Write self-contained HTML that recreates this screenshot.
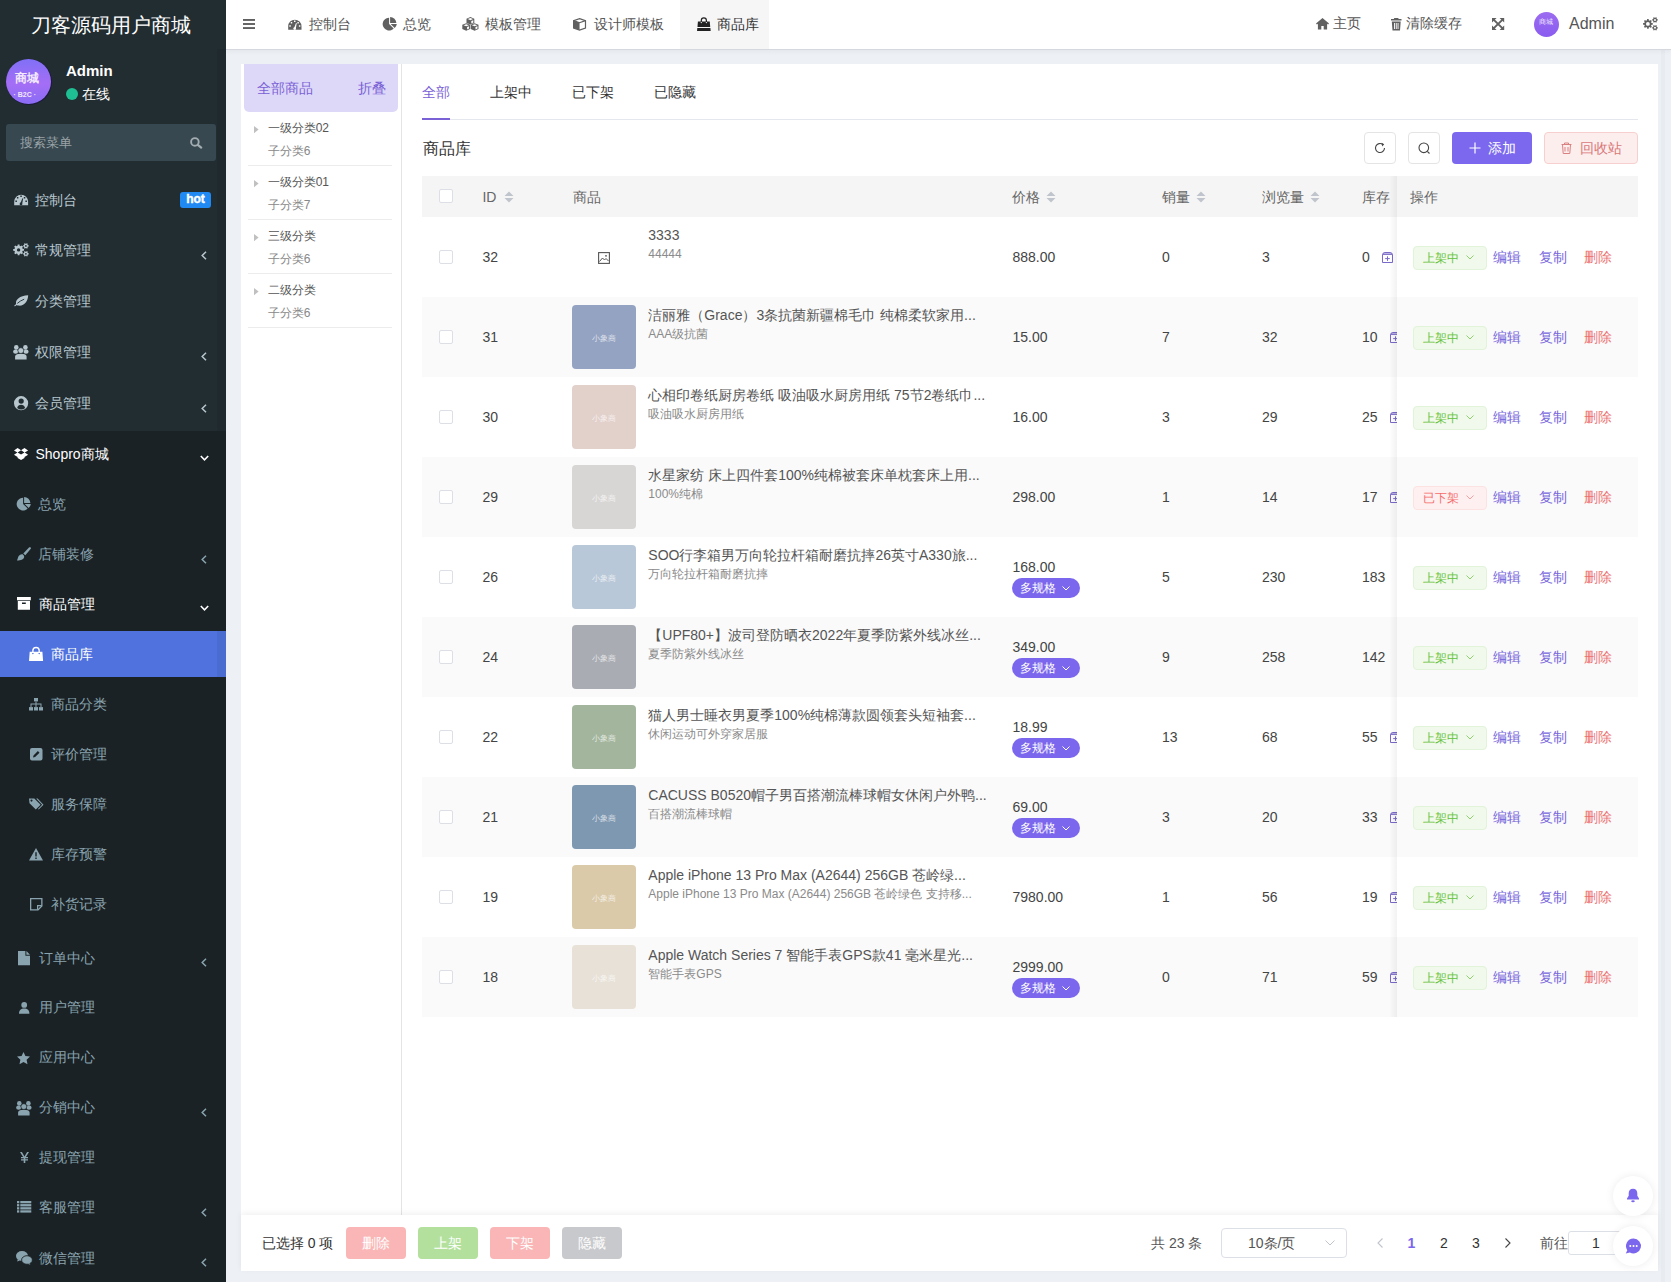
<!DOCTYPE html><html><head><meta charset="utf-8"><title>商品库</title><style>
*{box-sizing:border-box;margin:0;padding:0}
html,body{width:1671px;height:1282px;overflow:hidden}
body{position:relative;background:#edf0f5;font-family:"Liberation Sans",sans-serif;color:#333}
.t{position:absolute;white-space:nowrap}
.abs{position:absolute}
svg{position:absolute;overflow:visible}
</style></head><body>
<div class="abs" style="left:0;top:0;width:226px;height:431px;background:#222d32"></div>
<div class="abs" style="left:0;top:431px;width:226px;height:851px;background:#1a2226"></div>
<div class="abs" style="left:217px;top:49px;width:9px;height:382px;background:rgba(0,0,0,0.07)"></div>
<div class="t" style="left:31px;top:11.00px;font-size:20px;line-height:28px;color:#fff;">刀客源码用户商城</div>
<div class="abs" style="left:5.5px;top:58.5px;width:46px;height:46px;border-radius:50%;background:#1c1a3a"></div>
<div class="abs" style="left:6px;top:59px;width:45px;height:45px;border-radius:50%;background:linear-gradient(180deg,#8070f6 0%,#a46ef5 55%,#8a6cf5 100%);"></div>
<div class="t" style="left:15px;top:71.00px;font-size:12px;line-height:14px;color:#f3eaff;font-weight:bold">商城</div>
<div class="t" style="left:13.5px;top:90.30px;font-size:7px;line-height:10px;color:#f0e6ff;font-weight:bold">·&nbsp;B2C&nbsp;·</div>
<div class="t" style="left:66px;top:61.00px;font-size:15px;line-height:20px;color:#fff;font-weight:bold">Admin</div>
<div class="abs" style="left:66px;top:88px;width:12px;height:12px;border-radius:50%;background:#1fbf94"></div>
<div class="t" style="left:82px;top:84.00px;font-size:14px;line-height:20px;color:#fff;">在线</div>
<div class="abs" style="left:6px;top:124px;width:210px;height:37px;border-radius:3px;background:#374850"></div>
<div class="t" style="left:20px;top:134.00px;font-size:13px;line-height:18px;color:#9aa3a7;">搜索菜单</div>
<svg style="left:190px;top:137.3px" width="12.3" height="11.5" viewBox="0 0 12.3 11.5"><circle cx="4.9" cy="4.9" r="3.8" fill="none" stroke="#a3acb0" stroke-width="1.9"/><line x1="7.8" y1="7.8" x2="11.2" y2="10.6" stroke="#a3acb0" stroke-width="2.2" stroke-linecap="round"/></svg>
<svg style="left:13.9px;top:193.6px;color:#b8c7ce" width="14.30" height="11.30" viewBox="0 0 14.3 11.3" fill="currentColor"><path fill-rule="evenodd" d="M0.2 11.3V7.6A6.95 6.95 0 0 1 14.1 7.6V11.3ZM2.9 3.1h1.5v1.5h-1.5zM6.3 1.5h1.5v1.5h-1.5zM9.8 3.1h1.5v1.5h-1.5zM1.4 6.6h1.5v1.5h-1.5zM11.4 6.6h1.5v1.5h-1.5z"/><path fill="#222d32" d="M5.9 10.6L8.4 4.2 9.2 4.4 7.9 10.9Z"/><circle cx="7" cy="9.9" r="1.35" fill="#222d32"/></svg>
<div class="t" style="left:35px;top:189.80px;font-size:14px;line-height:20px;color:#b8c7ce;">控制台</div>
<div class="abs" style="left:180px;top:192px;width:31px;height:16px;border-radius:3px;background:#2189f2;color:#fff;font-weight:bold;font-size:12px;line-height:15px;text-align:center;-webkit-text-stroke:0.4px #fff">hot</div>
<svg style="left:13px;top:243px;color:#b8c7ce" width="16.00" height="13.70" viewBox="0 0 16 13.7" fill="currentColor"><path fill-rule="evenodd" d="M11.03 6.00 L11.03 7.80 L9.69 7.85 L9.20 9.06 L10.07 10.10 L8.80 11.37 L7.82 10.46 L6.62 10.98 L6.50 12.33 L4.70 12.33 L4.65 10.99 L3.44 10.50 L2.40 11.37 L1.13 10.10 L2.04 9.12 L1.52 7.92 L0.17 7.80 L0.17 6.00 L1.51 5.95 L2.00 4.74 L1.13 3.70 L2.40 2.43 L3.38 3.34 L4.58 2.82 L4.70 1.47 L6.50 1.47 L6.55 2.81 L7.76 3.30 L8.80 2.43 L10.07 3.70 L9.16 4.68 L9.68 5.88ZM3.90 6.90A1.7 1.7 0 1 0 7.30 6.90A1.7 1.7 0 1 0 3.90 6.90Z"/><path fill-rule="evenodd" d="M15.73 2.27 L15.73 3.53 L14.90 3.53 L14.48 4.29 L14.86 5.03 L13.77 5.67 L13.36 4.95 L12.49 4.96 L12.03 5.67 L10.94 5.03 L11.35 4.32 L10.91 3.57 L10.07 3.53 L10.07 2.27 L10.90 2.27 L11.32 1.51 L10.94 0.77 L12.03 0.13 L12.44 0.85 L13.31 0.84 L13.77 0.13 L14.86 0.77 L14.45 1.48 L14.89 2.23ZM12.00 2.90A0.9 0.9 0 1 0 13.80 2.90A0.9 0.9 0 1 0 12.00 2.90Z"/><path fill-rule="evenodd" d="M15.73 10.17 L15.73 11.43 L14.90 11.43 L14.48 12.19 L14.86 12.93 L13.77 13.57 L13.36 12.85 L12.49 12.86 L12.03 13.57 L10.94 12.93 L11.35 12.22 L10.91 11.47 L10.07 11.43 L10.07 10.17 L10.90 10.17 L11.32 9.41 L10.94 8.67 L12.03 8.03 L12.44 8.75 L13.31 8.74 L13.77 8.03 L14.86 8.67 L14.45 9.38 L14.89 10.13ZM12.00 10.80A0.9 0.9 0 1 0 13.80 10.80A0.9 0.9 0 1 0 12.00 10.80Z"/></svg>
<div class="t" style="left:35px;top:240.00px;font-size:14px;line-height:20px;color:#b8c7ce;">常规管理</div>
<svg style="left:201px;top:250.5px" width="6" height="9" viewBox="0 0 6 9"><path d="M5 0.8 L1.2 4.5 L5 8.2" fill="none" stroke="#b8c7ce" stroke-width="1.5"/></svg>
<svg style="left:13.9px;top:294.7px;color:#b8c7ce" width="14.30" height="11.30" viewBox="0 0 14.3 11.3" fill="currentColor"><path d="M0 10.9L2.1 8.9C1.2 4.6 5.6 0.9 14.2 0.3 13.9 6.3 10.6 11.1 4.6 10.6 3.9 10.5 3.3 10.3 2.8 10L1 11.3Z"/><path d="M3.3 8.4C5.2 6.6 7.4 5.3 10.2 4.2" stroke="#222d32" stroke-width="0.9" fill="none"/></svg>
<div class="t" style="left:35px;top:291.00px;font-size:14px;line-height:20px;color:#b8c7ce;">分类管理</div>
<svg style="left:13px;top:344.5px;color:#b8c7ce" width="15.70" height="14.50" viewBox="0 0 15.7 14.5" fill="currentColor"><circle cx="3.3" cy="2.4" r="2.3"/><circle cx="12.4" cy="2.4" r="2.3"/><ellipse cx="2.6" cy="6.7" rx="2.5" ry="2.1"/><ellipse cx="13.1" cy="6.7" rx="2.5" ry="2.1"/><circle cx="7.85" cy="5.6" r="2.9" stroke="#222d32" stroke-width="0.6"/><path d="M2.1 14.5V11.6C2.1 9.8 3.6 8.9 5.3 8.9H10.4C12.1 8.9 13.6 9.8 13.6 11.6V14.5Z"/></svg>
<div class="t" style="left:35px;top:341.50px;font-size:14px;line-height:20px;color:#b8c7ce;">权限管理</div>
<svg style="left:201px;top:352.0px" width="6" height="9" viewBox="0 0 6 9"><path d="M5 0.8 L1.2 4.5 L5 8.2" fill="none" stroke="#b8c7ce" stroke-width="1.5"/></svg>
<svg style="left:13.9px;top:395.8px;color:#b8c7ce" width="14.20" height="14.30" viewBox="0 0 14.2 14.3" fill="currentColor"><path fill-rule="evenodd" d="M0.00 7.15A7.1 7.1 0 1 1 14.20 7.15A7.1 7.1 0 1 1 0.00 7.15ZM4.60 5.10A2.6 2.6 0 1 0 9.80 5.10A2.6 2.6 0 1 0 4.60 5.10ZM3.2 11.9C3.6 9.6 5.2 8.8 7.1 8.8S10.6 9.6 11.1 11.9A5.6 5.6 0 0 1 3.2 11.9Z"/></svg>
<div class="t" style="left:35px;top:393.00px;font-size:14px;line-height:20px;color:#b8c7ce;">会员管理</div>
<svg style="left:201px;top:403.5px" width="6" height="9" viewBox="0 0 6 9"><path d="M5 0.8 L1.2 4.5 L5 8.2" fill="none" stroke="#b8c7ce" stroke-width="1.5"/></svg>
<svg style="left:13.9px;top:447.8px;color:#fff" width="14.10" height="12.00" viewBox="0 0 14.1 12" fill="currentColor"><path fill-rule="evenodd" d="M0 2.4L3.6 0 7.05 2.2 10.5 0 14.1 2.4 10.7 4.5 14.1 6.7 10.5 9V9.9L7.05 12 3.6 9.9V9L0 6.7 3.4 4.5ZM3.6 4.5L7.05 6.6 10.5 4.5 7.05 2.35Z"/></svg>
<div class="t" style="left:35.5px;top:444.00px;font-size:14px;line-height:20px;color:#fff;">Shopro商城</div>
<svg style="left:200px;top:454.7px" width="9" height="6" viewBox="0 0 9 6"><path d="M0.8 1 L4.5 4.8 L8.2 1" fill="none" stroke="#fff" stroke-width="1.6"/></svg>
<svg style="left:16.8px;top:497px;color:#8aa4af" width="13.80" height="13.30" viewBox="0 0 13.8 13.3" fill="currentColor"><path d="M6.1 0.7V7L10.7 11.5A6.4 6.4 0 1 1 6.1 0.7Z"/><path d="M7.1 0V6H13.4A6.4 6.4 0 0 0 7.1 0Z"/><path d="M7.6 7H13.8A6.6 6.6 0 0 1 11.7 11.1Z"/></svg>
<div class="t" style="left:38px;top:493.60px;font-size:14px;line-height:20px;color:#8aa4af;">总览</div>
<svg style="left:16.7px;top:547.4px;color:#8aa4af" width="14.50" height="13.60" viewBox="0 0 14.5 13.6" fill="currentColor"><path d="M13.3 0.3C13.9 0.7 14.2 1.2 13.8 1.8L8.3 8.3 6.3 6.6 12 0.5C12.4 0.1 12.9 0 13.3 0.3Z"/><path d="M5.7 7.2C3.8 6.9 2.1 7.9 1.4 9.6 1 10.7 0.7 12.2 0 13.4 2.1 13.7 4.8 13.2 6.3 11.8 7.5 10.6 7.8 8.9 5.7 7.2Z"/></svg>
<div class="t" style="left:38px;top:544.00px;font-size:14px;line-height:20px;color:#8aa4af;">店铺装修</div>
<svg style="left:201px;top:554.5px" width="6" height="9" viewBox="0 0 6 9"><path d="M5 0.8 L1.2 4.5 L5 8.2" fill="none" stroke="#8aa4af" stroke-width="1.5"/></svg>
<svg style="left:16.7px;top:597.3px;color:#fff" width="13.80" height="12.70" viewBox="0 0 13.8 12.7" fill="currentColor"><rect x="0" y="0" width="13.8" height="3.3"/><path fill-rule="evenodd" d="M0.8 4.1H13V12.7H0.8ZM5 5.6V6.9H8.8V5.6Z"/></svg>
<div class="t" style="left:38.5px;top:594.00px;font-size:14px;line-height:20px;color:#fff;">商品管理</div>
<svg style="left:200px;top:604.7px" width="9" height="6" viewBox="0 0 9 6"><path d="M0.8 1 L4.5 4.8 L8.2 1" fill="none" stroke="#fff" stroke-width="1.6"/></svg>
<div class="abs" style="left:0;top:631px;width:226px;height:46px;background:#4f72de"></div>
<div class="abs" style="left:217px;top:631px;width:9px;height:46px;background:rgba(0,0,0,0.06)"></div>
<svg style="left:29px;top:647px;color:#fff" width="14.10" height="14.10" viewBox="0 0 14.1 14.1" fill="currentColor"><path fill-rule="evenodd" d="M0.7 4.8H13.4L14.1 14.1H0ZM3.15 6.60A0.75 0.75 0 1 0 4.65 6.60A0.75 0.75 0 1 0 3.15 6.60ZM9.45 6.60A0.75 0.75 0 1 0 10.95 6.60A0.75 0.75 0 1 0 9.45 6.60Z"/><path d="M3.9 6V3.6A3.15 3.15 0 0 1 10.2 3.6V6" fill="none" stroke="currentColor" stroke-width="1.4"/></svg>
<div class="t" style="left:50.7px;top:644.00px;font-size:14px;line-height:20px;color:#fff;">商品库</div>
<svg style="left:29px;top:697.8px;color:#8aa4af" width="14.00" height="12.50" viewBox="0 0 14 12.5" fill="currentColor"><rect x="5" y="0" width="4" height="3.4"/><rect x="0" y="9.1" width="4" height="3.4"/><rect x="5" y="9.1" width="4" height="3.4"/><rect x="10" y="9.1" width="4" height="3.4"/><path d="M6.5 3.4h1v2.2h5v3.5h-1V6.6h-4v2.5h-1V6.6h-4v2.5h-1V5.6h5z"/></svg>
<div class="t" style="left:50.7px;top:693.50px;font-size:14px;line-height:20px;color:#8aa4af;">商品分类</div>
<svg style="left:29.5px;top:747.8px;color:#8aa4af" width="12.50" height="12.50" viewBox="0 0 12.5 12.5" fill="currentColor"><path fill-rule="evenodd" d="M2 0H10.5A2 2 0 0 1 12.5 2V10.5A2 2 0 0 1 10.5 12.5H2A2 2 0 0 1 0 10.5V2A2 2 0 0 1 2 0ZM3 9.6L3.5 7.5 7.9 3.1 9.5 4.7 5.1 9.1Z"/></svg>
<div class="t" style="left:50.7px;top:743.50px;font-size:14px;line-height:20px;color:#8aa4af;">评价管理</div>
<svg style="left:28.5px;top:798.3px;color:#8aa4af" width="14.50" height="12.50" viewBox="0 0 14.5 12.5" fill="currentColor"><path fill-rule="evenodd" d="M0 0.5H5.3L11.6 6.8 6.8 11.6 0.5 5.3ZM1.45 2.60A1.05 1.05 0 1 0 3.55 2.60A1.05 1.05 0 1 0 1.45 2.60Z"/><path d="M7.2 0.5H8.6L14.5 6.8 9.7 11.6 9 10.9 13.1 6.8Z"/></svg>
<div class="t" style="left:50.7px;top:794.00px;font-size:14px;line-height:20px;color:#8aa4af;">服务保障</div>
<svg style="left:29px;top:848.3px;color:#8aa4af" width="14.00" height="12.50" viewBox="0 0 14 12.5" fill="currentColor"><path fill-rule="evenodd" d="M7 0L14 12.5H0ZM6.3 4.3V8.6H7.7V4.3ZM6.3 9.6V11H7.7V9.6Z"/></svg>
<div class="t" style="left:50.7px;top:844.00px;font-size:14px;line-height:20px;color:#8aa4af;">库存预警</div>
<svg style="left:29.5px;top:897.8px;color:#8aa4af" width="12.50" height="12.50" viewBox="0 0 12.5 12.5" fill="currentColor"><path d="M0.65 0.65H11.85V8L8 11.85H0.65Z" fill="none" stroke="currentColor" stroke-width="1.3"/><path d="M7.6 11.8V7.6H11.8" fill="none" stroke="currentColor" stroke-width="1.2"/></svg>
<div class="t" style="left:50.7px;top:893.50px;font-size:14px;line-height:20px;color:#8aa4af;">补货记录</div>
<svg style="left:17.9px;top:950.8px;color:#8aa4af" width="12.00" height="14.20" viewBox="0 0 12 14.2" fill="currentColor"><path d="M0 0H7.4V4.7H12V14.2H0Z"/><path d="M8.4 0L12 3.7H8.4Z"/></svg>
<div class="t" style="left:38.5px;top:947.50px;font-size:14px;line-height:20px;color:#8aa4af;">订单中心</div>
<svg style="left:201px;top:958.0px" width="6" height="9" viewBox="0 0 6 9"><path d="M5 0.8 L1.2 4.5 L5 8.2" fill="none" stroke="#8aa4af" stroke-width="1.5"/></svg>
<svg style="left:18.8px;top:1002px;color:#8aa4af" width="10.40" height="11.80" viewBox="0 0 10.4 11.8" fill="currentColor"><circle cx="5.2" cy="2.9" r="2.9"/><path d="M0 11.8C0 8.2 2 6.6 5.2 6.6S10.4 8.2 10.4 11.8Z"/></svg>
<div class="t" style="left:38.5px;top:997.00px;font-size:14px;line-height:20px;color:#8aa4af;">用户管理</div>
<svg style="left:17.3px;top:1051.8px;color:#8aa4af" width="13.00" height="12.50" viewBox="0 0 13 12.5" fill="currentColor"><path d="M6.5 0L8.4 4.1 13 4.6 9.6 7.7 10.5 12.3 6.5 10 2.5 12.3 3.4 7.7 0 4.6 4.6 4.1Z"/></svg>
<div class="t" style="left:38.5px;top:1047.00px;font-size:14px;line-height:20px;color:#8aa4af;">应用中心</div>
<svg style="left:16.2px;top:1100.5px;color:#8aa4af" width="15.70" height="14.50" viewBox="0 0 15.7 14.5" fill="currentColor"><circle cx="3.3" cy="2.4" r="2.3"/><circle cx="12.4" cy="2.4" r="2.3"/><ellipse cx="2.6" cy="6.7" rx="2.5" ry="2.1"/><ellipse cx="13.1" cy="6.7" rx="2.5" ry="2.1"/><circle cx="7.85" cy="5.6" r="2.9" stroke="#1a2226" stroke-width="0.6"/><path d="M2.1 14.5V11.6C2.1 9.8 3.6 8.9 5.3 8.9H10.4C12.1 8.9 13.6 9.8 13.6 11.6V14.5Z"/></svg>
<div class="t" style="left:38.5px;top:1097.40px;font-size:14px;line-height:20px;color:#8aa4af;">分销中心</div>
<svg style="left:201px;top:1107.9px" width="6" height="9" viewBox="0 0 6 9"><path d="M5 0.8 L1.2 4.5 L5 8.2" fill="none" stroke="#8aa4af" stroke-width="1.5"/></svg>
<svg style="left:19.5px;top:1151.6px;color:#8aa4af" width="9.00" height="11.00" viewBox="0 0 9 11" fill="currentColor"><path d="M0 0H1.9L4.5 4.4 7.1 0H9L5.9 5.1H8V6.2H5.3V7.3H8V8.4H5.3V11H3.7V8.4H1V7.3H3.7V6.2H1V5.1H3.1Z"/></svg>
<div class="t" style="left:38.5px;top:1147.20px;font-size:14px;line-height:20px;color:#8aa4af;">提现管理</div>
<svg style="left:16.8px;top:1201.4px;color:#8aa4af" width="14.30" height="11.60" viewBox="0 0 14.3 11.6" fill="currentColor"><rect x="0" y="0" width="2.3" height="2.3"/><rect x="0" y="3.1" width="2.3" height="2.3"/><rect x="0" y="6.2" width="2.3" height="2.3"/><rect x="0" y="9.3" width="2.3" height="2.3"/><rect x="3.3" y="0" width="11" height="2.3"/><rect x="3.3" y="3.1" width="11" height="2.3"/><rect x="3.3" y="6.2" width="11" height="2.3"/><rect x="3.3" y="9.3" width="11" height="2.3"/></svg>
<div class="t" style="left:38.5px;top:1197.40px;font-size:14px;line-height:20px;color:#8aa4af;">客服管理</div>
<svg style="left:201px;top:1207.9px" width="6" height="9" viewBox="0 0 6 9"><path d="M5 0.8 L1.2 4.5 L5 8.2" fill="none" stroke="#8aa4af" stroke-width="1.5"/></svg>
<svg style="left:15.8px;top:1250.5px;color:#8aa4af" width="16.40" height="13.70" viewBox="0 0 16.4 13.7" fill="currentColor"><ellipse cx="6" cy="5" rx="6" ry="5"/><path d="M1.8 8.3L1.2 10.6 3.9 9.4Z"/><ellipse cx="11" cy="9" rx="5.4" ry="4.3" stroke="#1a2226" stroke-width="0.9"/><path d="M13.5 12.3L14.4 13.7 11.6 12.8Z"/></svg>
<div class="t" style="left:38.5px;top:1247.70px;font-size:14px;line-height:20px;color:#8aa4af;">微信管理</div>
<svg style="left:201px;top:1258.2px" width="6" height="9" viewBox="0 0 6 9"><path d="M5 0.8 L1.2 4.5 L5 8.2" fill="none" stroke="#8aa4af" stroke-width="1.5"/></svg>
<div class="abs" style="left:226px;top:0;width:1445px;height:50px;background:#fff;border-bottom:1px solid #d5d9df;box-shadow:0 2px 4px rgba(0,0,0,0.04)"></div>
<div class="abs" style="left:680px;top:0;width:89px;height:49px;background:#f6f6f6"></div>
<svg style="left:242.6px;top:18.7px" width="12" height="10" viewBox="0 0 12 10" fill="#606060"><rect y="0" width="12" height="1.9"/><rect y="4.05" width="12" height="1.9"/><rect y="8.1" width="12" height="1.9"/></svg>
<svg style="left:288.2px;top:18.8px;color:#606060" width="13.70" height="10.83" viewBox="0 0 14.3 11.3" fill="currentColor"><path fill-rule="evenodd" d="M0.2 11.3V7.6A6.95 6.95 0 0 1 14.1 7.6V11.3ZM2.9 3.1h1.5v1.5h-1.5zM6.3 1.5h1.5v1.5h-1.5zM9.8 3.1h1.5v1.5h-1.5zM1.4 6.6h1.5v1.5h-1.5zM11.4 6.6h1.5v1.5h-1.5z"/><path fill="#fff" d="M5.9 10.6L8.4 4.2 9.2 4.4 7.9 10.9Z"/><circle cx="7" cy="9.9" r="1.35" fill="#fff"/></svg>
<div class="t" style="left:308.5px;top:13.60px;font-size:14px;line-height:20px;color:#555;">控制台</div>
<svg style="left:383.2px;top:17.0px;color:#606060" width="13.80" height="13.30" viewBox="0 0 13.8 13.3" fill="currentColor"><path d="M6.1 0.7V7L10.7 11.5A6.4 6.4 0 1 1 6.1 0.7Z"/><path d="M7.1 0V6H13.4A6.4 6.4 0 0 0 7.1 0Z"/><path d="M7.6 7H13.8A6.6 6.6 0 0 1 11.7 11.1Z"/></svg>
<div class="t" style="left:403.3px;top:13.60px;font-size:14px;line-height:20px;color:#555;">总览</div>
<svg style="left:462.2px;top:17px;color:#606060" width="16.80" height="13.70" viewBox="0 0 16.8 13.7" fill="currentColor"><path d="M8.4 0.09999999999999964L12.3 1.6999999999999997V6.0L8.4 7.6L4.5 6.0V1.6999999999999997ZM4.2 6.2L8.1 7.800000000000001V12.100000000000001L4.2 13.7L0.30000000000000027 12.100000000000001V7.800000000000001ZM12.6 6.2L16.5 7.800000000000001V12.100000000000001L12.6 13.7L8.7 12.100000000000001V7.800000000000001Z"/><path fill="#fff" d="M8.4 1.0999999999999996L11.100000000000001 2.0999999999999996L8.4 3.1999999999999997L5.7 2.0999999999999996ZM9.3 4.0L11.3 3.1999999999999997V5.5L9.3 6.4ZM4.2 7.2L6.9 8.200000000000001L4.2 9.3L1.5 8.200000000000001ZM5.1000000000000005 10.1L7.1 9.3V11.6L5.1000000000000005 12.5ZM12.6 7.2L15.3 8.200000000000001L12.6 9.3L9.899999999999999 8.200000000000001ZM13.5 10.1L15.5 9.3V11.6L13.5 12.5Z"/></svg>
<div class="t" style="left:484.5px;top:13.60px;font-size:14px;line-height:20px;color:#555;">模板管理</div>
<svg style="left:573.4px;top:18px;color:#606060" width="13.10" height="12.70" viewBox="0 0 13.1 12.7" fill="currentColor"><path d="M6.55 0.6L12.5 2.6V10.1L6.55 12.1 0.6 10.1V2.6Z" fill="none" stroke="currentColor" stroke-width="1.2"/><path d="M0.6 2.6L6.55 4.7 12.5 2.6" fill="none" stroke="currentColor" stroke-width="1.2"/><path d="M0.6 2.6L6.55 4.7V12.1L0.6 10.1Z"/></svg>
<div class="t" style="left:594px;top:13.60px;font-size:14px;line-height:20px;color:#555;">设计师模板</div>
<svg style="left:697px;top:16.9px;color:#222" width="13.70" height="14.00" viewBox="0 0 13.7 14" fill="currentColor"><path d="M0.9 4.4H12.8L13.2 10H0.5Z"/><path d="M0.3 10.9H13.4L13.7 14H0Z"/><path d="M4.3 5V3.4A2.55 2.55 0 0 1 9.4 3.4V5" fill="none" stroke="currentColor" stroke-width="1.2"/><circle cx="4.3" cy="5.6" r="0.7" fill="#f6f6f6"/><circle cx="9.4" cy="5.6" r="0.7" fill="#f6f6f6"/></svg>
<div class="t" style="left:717px;top:13.60px;font-size:14px;line-height:20px;color:#333;">商品库</div>
<svg style="left:1315.5px;top:18.2px;color:#606060" width="13.00" height="11.50" viewBox="0 0 13 11.5" fill="currentColor"><path d="M6.5 0L0 5.6 0.9 6.5 1.9 5.7V11.5H5.3V8H7.7V11.5H11.1V5.7L12.1 6.5 13 5.6Z"/></svg>
<div class="t" style="left:1332.6px;top:13.30px;font-size:14px;line-height:20px;color:#555;">主页</div>
<svg style="left:1390.5px;top:17.8px;color:#606060" width="10.50" height="12.50" viewBox="0 0 10.5 12.5" fill="currentColor"><path d="M3.3 0H7.2L7.7 1.1H10.5V2.6H0V1.1H2.8Z"/><path fill-rule="evenodd" d="M0.8 3.4H9.7L9 12.5H1.5ZM3 5V11H3.9V5ZM4.8 5V11H5.7V5ZM6.6 5V11H7.5V5Z"/></svg>
<div class="t" style="left:1405.7px;top:13.30px;font-size:14px;line-height:20px;color:#555;">清除缓存</div>
<svg style="left:1491.8px;top:18px;color:#606060" width="12.20" height="12.00" viewBox="0 0 12.2 12" fill="currentColor"><path d="M0 0H4.6L0 4.6ZM12.2 0V4.6L7.6 0ZM0 12V7.4L4.6 12ZM12.2 12H7.6L12.2 7.4Z"/><path d="M1.6 1.6L10.6 10.4M10.6 1.6L1.6 10.4" stroke="currentColor" stroke-width="2" fill="none"/></svg>
<div class="abs" style="left:1534px;top:12px;width:25px;height:25px;border-radius:50%;background:linear-gradient(180deg,#9c6cf0,#8a5cf0)"></div>
<div class="t" style="left:1539px;top:17.50px;font-size:7px;line-height:8px;color:#efe6ff;">商城</div>
<div class="t" style="left:1569px;top:13.50px;font-size:16px;line-height:20px;color:#555;">Admin</div>
<svg style="left:1643px;top:19.1px;color:#606060" width="15.00" height="11.60" viewBox="0 0 15 11.6" fill="currentColor"><path fill-rule="evenodd" d="M9.73 4.10 L9.73 5.70 L8.50 5.74 L8.07 6.81 L8.89 7.75 L7.75 8.89 L6.86 8.04 L5.79 8.49 L5.70 9.73 L4.10 9.73 L4.06 8.50 L2.99 8.07 L2.05 8.89 L0.91 7.75 L1.76 6.86 L1.31 5.79 L0.07 5.70 L0.07 4.10 L1.30 4.06 L1.73 2.99 L0.91 2.05 L2.05 0.91 L2.94 1.76 L4.01 1.31 L4.10 0.07 L5.70 0.07 L5.74 1.30 L6.81 1.73 L7.75 0.91 L8.89 2.05 L8.04 2.94 L8.49 4.01ZM3.00 4.90A1.9 1.9 0 1 0 6.80 4.90A1.9 1.9 0 1 0 3.00 4.90Z"/><path fill-rule="evenodd" d="M14.83 0.27 L14.83 1.53 L14.00 1.53 L13.58 2.29 L13.96 3.03 L12.87 3.67 L12.46 2.95 L11.59 2.96 L11.13 3.67 L10.04 3.03 L10.45 2.32 L10.01 1.57 L9.17 1.53 L9.17 0.27 L10.00 0.27 L10.42 -0.49 L10.04 -1.23 L11.13 -1.87 L11.54 -1.15 L12.41 -1.16 L12.87 -1.87 L13.96 -1.23 L13.55 -0.52 L13.99 0.23ZM11.00 0.90A1.0 1.0 0 1 0 13.00 0.90A1.0 1.0 0 1 0 11.00 0.90Z"/><path fill-rule="evenodd" d="M14.83 8.17 L14.83 9.43 L14.00 9.43 L13.58 10.19 L13.96 10.93 L12.87 11.57 L12.46 10.85 L11.59 10.86 L11.13 11.57 L10.04 10.93 L10.45 10.22 L10.01 9.47 L9.17 9.43 L9.17 8.17 L10.00 8.17 L10.42 7.41 L10.04 6.67 L11.13 6.03 L11.54 6.75 L12.41 6.74 L12.87 6.03 L13.96 6.67 L13.55 7.38 L13.99 8.13ZM11.00 8.80A1.0 1.0 0 1 0 13.00 8.80A1.0 1.0 0 1 0 11.00 8.80Z"/></svg>
<div class="abs" style="left:241px;top:64px;width:1417px;height:1151px;background:#fff"></div>
<div class="abs" style="left:401px;top:64px;width:1px;height:1151px;background:#e4e4e4"></div>
<div class="abs" style="left:244px;top:64px;width:154px;height:48px;background:#ded8f8;border-radius:0 0 5px 5px"></div>
<div class="t" style="left:256.8px;top:78.00px;font-size:14px;line-height:20px;color:#7a62d6;">全部商品</div>
<div class="t" style="left:358.3px;top:78.00px;font-size:14px;line-height:20px;color:#7a62d6;">折叠</div>
<svg style="left:254px;top:126.19999999999999px" width="5" height="7" viewBox="0 0 5 7"><path d="M0 0L4.6 3.6L0 7.2z" fill="#c0c0c0"/></svg>
<div class="t" style="left:267.7px;top:120.10px;font-size:12px;line-height:16px;color:#555;">一级分类02</div>
<div class="t" style="left:267.7px;top:143.10px;font-size:12px;line-height:16px;color:#888;">子分类6</div>
<div class="abs" style="left:248px;top:165.2px;width:144px;height:1px;background:#ececec"></div>
<svg style="left:254px;top:180.2px" width="5" height="7" viewBox="0 0 5 7"><path d="M0 0L4.6 3.6L0 7.2z" fill="#c0c0c0"/></svg>
<div class="t" style="left:267.7px;top:174.10px;font-size:12px;line-height:16px;color:#555;">一级分类01</div>
<div class="t" style="left:267.7px;top:197.10px;font-size:12px;line-height:16px;color:#888;">子分类7</div>
<div class="abs" style="left:248px;top:219.2px;width:144px;height:1px;background:#ececec"></div>
<svg style="left:254px;top:234.2px" width="5" height="7" viewBox="0 0 5 7"><path d="M0 0L4.6 3.6L0 7.2z" fill="#c0c0c0"/></svg>
<div class="t" style="left:267.7px;top:228.10px;font-size:12px;line-height:16px;color:#555;">三级分类</div>
<div class="t" style="left:267.7px;top:251.10px;font-size:12px;line-height:16px;color:#888;">子分类6</div>
<div class="abs" style="left:248px;top:273.2px;width:144px;height:1px;background:#ececec"></div>
<svg style="left:254px;top:288.2px" width="5" height="7" viewBox="0 0 5 7"><path d="M0 0L4.6 3.6L0 7.2z" fill="#c0c0c0"/></svg>
<div class="t" style="left:267.7px;top:282.10px;font-size:12px;line-height:16px;color:#555;">二级分类</div>
<div class="t" style="left:267.7px;top:305.10px;font-size:12px;line-height:16px;color:#888;">子分类6</div>
<div class="abs" style="left:248px;top:327.2px;width:144px;height:1px;background:#ececec"></div>
<div class="t" style="left:422px;top:81.60px;font-size:14px;line-height:20px;color:#7a62d6;">全部</div>
<div class="t" style="left:490px;top:81.60px;font-size:14px;line-height:20px;color:#333;">上架中</div>
<div class="t" style="left:572px;top:81.60px;font-size:14px;line-height:20px;color:#333;">已下架</div>
<div class="t" style="left:654px;top:81.60px;font-size:14px;line-height:20px;color:#333;">已隐藏</div>
<div class="abs" style="left:422px;top:119px;width:1216px;height:1px;background:#e4e7ed"></div>
<div class="abs" style="left:422px;top:118px;width:28px;height:2px;background:#7a62d6"></div>
<div class="t" style="left:422.6px;top:138.00px;font-size:16px;line-height:22px;color:#333;">商品库</div>
<div class="abs" style="left:1364px;top:132px;width:32px;height:32px;border:1px solid #e4e4e4;border-radius:4px;background:#fff"></div>
<svg style="left:1374px;top:142px" width="12" height="12" viewBox="0 0 12 12"><path d="M10.5 6A4.5 4.5 0 1 1 8.8 2.5" fill="none" stroke="#444" stroke-width="1.1"/><path d="M7.5 0.8L10.2 2.3 8.2 4.6z" fill="#444"/></svg>
<div class="abs" style="left:1408px;top:132px;width:32px;height:32px;border:1px solid #e4e4e4;border-radius:4px;background:#fff"></div>
<svg style="left:1418px;top:142px" width="13" height="13" viewBox="0 0 13 13"><circle cx="5.8" cy="5.8" r="4.8" fill="none" stroke="#444" stroke-width="1.1"/><path d="M9.3 9.3L11.5 11.5" stroke="#444" stroke-width="1.1"/></svg>
<div class="abs" style="left:1452px;top:132px;width:80px;height:32px;border-radius:4px;background:#7b68ee"></div>
<svg style="left:1469px;top:142px" width="12" height="12" viewBox="0 0 12 12"><path d="M6 0.5V11.5M0.5 6H11.5" stroke="#fff" stroke-width="1.2"/></svg>
<div class="t" style="left:1488px;top:138.00px;font-size:14px;line-height:20px;color:#fff;">添加</div>
<div class="abs" style="left:1544px;top:132px;width:94px;height:32px;border-radius:4px;background:#fdeeee;border:1px solid #f8cfcf"></div>
<svg style="left:1561px;top:142px" width="11" height="12" viewBox="0 0 11 12"><path d="M0.5 2.5h10M3.5 2.5V1h4v1.5M1.5 2.5l.7 9h6.6l.7-9M4 5v4.5M7 5v4.5" fill="none" stroke="#d98080" stroke-width="1"/></svg>
<div class="t" style="left:1580px;top:138.00px;font-size:14px;line-height:20px;color:#d97878;">回收站</div>
<div class="abs" style="left:422px;top:176px;width:1216px;height:41px;background:#f5f5f5"></div>
<div class="abs" style="left:439px;top:189px;width:14px;height:14px;border:1px solid #dcdfe6;border-radius:2px;background:#fff"></div>
<div class="t" style="left:482.4px;top:186.60px;font-size:14px;line-height:20px;color:#666;">ID</div>
<svg style="left:504px;top:190.6px" width="10" height="12" viewBox="0 0 10 12"><path d="M5 0.5L9.5 5H0.5z" fill="#c0c4cc"/><path d="M5 11.5L9.5 7H0.5z" fill="#c0c4cc"/></svg>
<div class="t" style="left:572.6px;top:186.60px;font-size:14px;line-height:20px;color:#666;">商品</div>
<div class="t" style="left:1012px;top:186.60px;font-size:14px;line-height:20px;color:#666;">价格</div>
<svg style="left:1046px;top:190.6px" width="10" height="12" viewBox="0 0 10 12"><path d="M5 0.5L9.5 5H0.5z" fill="#c0c4cc"/><path d="M5 11.5L9.5 7H0.5z" fill="#c0c4cc"/></svg>
<div class="t" style="left:1162px;top:186.60px;font-size:14px;line-height:20px;color:#666;">销量</div>
<svg style="left:1196px;top:190.6px" width="10" height="12" viewBox="0 0 10 12"><path d="M5 0.5L9.5 5H0.5z" fill="#c0c4cc"/><path d="M5 11.5L9.5 7H0.5z" fill="#c0c4cc"/></svg>
<div class="t" style="left:1262px;top:186.60px;font-size:14px;line-height:20px;color:#666;">浏览量</div>
<svg style="left:1310px;top:190.6px" width="10" height="12" viewBox="0 0 10 12"><path d="M5 0.5L9.5 5H0.5z" fill="#c0c4cc"/><path d="M5 11.5L9.5 7H0.5z" fill="#c0c4cc"/></svg>
<div class="t" style="left:1362px;top:186.60px;font-size:14px;line-height:20px;color:#666;">库存</div>
<div class="abs" style="left:422px;top:217px;width:1216px;height:80px;background:#fff"></div>
<div class="abs" style="left:439px;top:250px;width:14px;height:14px;border:1px solid #dcdfe6;border-radius:2px;background:#fff"></div>
<div class="t" style="left:482.4px;top:247.00px;font-size:14px;line-height:20px;color:#444;">32</div>
<svg style="left:598px;top:251.5px" width="12" height="12" viewBox="0 0 12 12"><rect x="0.6" y="0.6" width="10.8" height="10.8" fill="none" stroke="#555" stroke-width="1.1"/><path d="M1.5 9.5L4.5 6l2 2 1.5-1.5 2.5 2.5" fill="none" stroke="#555" stroke-width="1"/><circle cx="8" cy="3.8" r="0.9" fill="#555"/></svg>
<div class="t" style="left:648.3px;top:225.00px;font-size:14px;line-height:20px;color:#555;">3333</div>
<div class="t" style="left:648.3px;top:245.70px;font-size:12px;line-height:16px;color:#8a8a8a;">44444</div>
<div class="t" style="left:1012.5px;top:247.00px;font-size:14px;line-height:20px;color:#444;">888.00</div>
<div class="t" style="left:1162px;top:247.00px;font-size:14px;line-height:20px;color:#444;">0</div>
<div class="t" style="left:1262px;top:247.00px;font-size:14px;line-height:20px;color:#444;">3</div>
<div class="t" style="left:1362px;top:247.00px;font-size:14px;line-height:20px;color:#444;">0</div>
<svg style="left:1381.9px;top:251.5px" width="11" height="11" viewBox="0 0 11 11"><path d="M0.5 10.5V3Q0.5 0.5 3 0.5H8Q10.5 0.5 10.5 3V10.5z" fill="none" stroke="#7a69c8" stroke-width="1"/><path d="M1 2.2h9" stroke="#7a69c8" stroke-width="1.4"/><path d="M5.5 4.3v4.6M3.2 6.6h4.6" stroke="#7a69c8" stroke-width="1"/></svg>
<div class="abs" style="left:422px;top:297px;width:1216px;height:80px;background:#fafafa"></div>
<div class="abs" style="left:439px;top:330px;width:14px;height:14px;border:1px solid #dcdfe6;border-radius:2px;background:#fff"></div>
<div class="t" style="left:482.4px;top:327.00px;font-size:14px;line-height:20px;color:#444;">31</div>
<div class="abs" style="left:572px;top:305px;width:64px;height:64px;border-radius:4px;background:#94a3c2"></div>
<div class="t" style="left:592px;top:333.80px;font-size:7.5px;line-height:10px;color:rgba(255,255,255,0.7);">小象商</div>
<div class="t" style="left:648.3px;top:305.00px;font-size:14px;line-height:20px;color:#555;">洁丽雅（Grace）3条抗菌新疆棉毛巾 纯棉柔软家用...</div>
<div class="t" style="left:648.3px;top:325.70px;font-size:12px;line-height:16px;color:#8a8a8a;">AAA级抗菌</div>
<div class="t" style="left:1012.5px;top:327.00px;font-size:14px;line-height:20px;color:#444;">15.00</div>
<div class="t" style="left:1162px;top:327.00px;font-size:14px;line-height:20px;color:#444;">7</div>
<div class="t" style="left:1262px;top:327.00px;font-size:14px;line-height:20px;color:#444;">32</div>
<div class="t" style="left:1362px;top:327.00px;font-size:14px;line-height:20px;color:#444;">10</div>
<svg style="left:1389.7px;top:331.5px" width="11" height="11" viewBox="0 0 11 11"><path d="M0.5 10.5V3Q0.5 0.5 3 0.5H8Q10.5 0.5 10.5 3V10.5z" fill="none" stroke="#7a69c8" stroke-width="1"/><path d="M1 2.2h9" stroke="#7a69c8" stroke-width="1.4"/><path d="M5.5 4.3v4.6M3.2 6.6h4.6" stroke="#7a69c8" stroke-width="1"/></svg>
<div class="abs" style="left:422px;top:377px;width:1216px;height:80px;background:#fff"></div>
<div class="abs" style="left:439px;top:410px;width:14px;height:14px;border:1px solid #dcdfe6;border-radius:2px;background:#fff"></div>
<div class="t" style="left:482.4px;top:407.00px;font-size:14px;line-height:20px;color:#444;">30</div>
<div class="abs" style="left:572px;top:385px;width:64px;height:64px;border-radius:4px;background:#e2d0cb"></div>
<div class="t" style="left:592px;top:413.80px;font-size:7.5px;line-height:10px;color:rgba(255,255,255,0.7);">小象商</div>
<div class="t" style="left:648.3px;top:385.00px;font-size:14px;line-height:20px;color:#555;">心相印卷纸厨房卷纸 吸油吸水厨房用纸 75节2卷纸巾...</div>
<div class="t" style="left:648.3px;top:405.70px;font-size:12px;line-height:16px;color:#8a8a8a;">吸油吸水厨房用纸</div>
<div class="t" style="left:1012.5px;top:407.00px;font-size:14px;line-height:20px;color:#444;">16.00</div>
<div class="t" style="left:1162px;top:407.00px;font-size:14px;line-height:20px;color:#444;">3</div>
<div class="t" style="left:1262px;top:407.00px;font-size:14px;line-height:20px;color:#444;">29</div>
<div class="t" style="left:1362px;top:407.00px;font-size:14px;line-height:20px;color:#444;">25</div>
<svg style="left:1389.7px;top:411.5px" width="11" height="11" viewBox="0 0 11 11"><path d="M0.5 10.5V3Q0.5 0.5 3 0.5H8Q10.5 0.5 10.5 3V10.5z" fill="none" stroke="#7a69c8" stroke-width="1"/><path d="M1 2.2h9" stroke="#7a69c8" stroke-width="1.4"/><path d="M5.5 4.3v4.6M3.2 6.6h4.6" stroke="#7a69c8" stroke-width="1"/></svg>
<div class="abs" style="left:422px;top:457px;width:1216px;height:80px;background:#fafafa"></div>
<div class="abs" style="left:439px;top:490px;width:14px;height:14px;border:1px solid #dcdfe6;border-radius:2px;background:#fff"></div>
<div class="t" style="left:482.4px;top:487.00px;font-size:14px;line-height:20px;color:#444;">29</div>
<div class="abs" style="left:572px;top:465px;width:64px;height:64px;border-radius:4px;background:#d8d6d4"></div>
<div class="t" style="left:592px;top:493.80px;font-size:7.5px;line-height:10px;color:rgba(255,255,255,0.7);">小象商</div>
<div class="t" style="left:648.3px;top:465.00px;font-size:14px;line-height:20px;color:#555;">水星家纺 床上四件套100%纯棉被套床单枕套床上用...</div>
<div class="t" style="left:648.3px;top:485.70px;font-size:12px;line-height:16px;color:#8a8a8a;">100%纯棉</div>
<div class="t" style="left:1012.5px;top:487.00px;font-size:14px;line-height:20px;color:#444;">298.00</div>
<div class="t" style="left:1162px;top:487.00px;font-size:14px;line-height:20px;color:#444;">1</div>
<div class="t" style="left:1262px;top:487.00px;font-size:14px;line-height:20px;color:#444;">14</div>
<div class="t" style="left:1362px;top:487.00px;font-size:14px;line-height:20px;color:#444;">17</div>
<svg style="left:1389.7px;top:491.5px" width="11" height="11" viewBox="0 0 11 11"><path d="M0.5 10.5V3Q0.5 0.5 3 0.5H8Q10.5 0.5 10.5 3V10.5z" fill="none" stroke="#7a69c8" stroke-width="1"/><path d="M1 2.2h9" stroke="#7a69c8" stroke-width="1.4"/><path d="M5.5 4.3v4.6M3.2 6.6h4.6" stroke="#7a69c8" stroke-width="1"/></svg>
<div class="abs" style="left:422px;top:537px;width:1216px;height:80px;background:#fff"></div>
<div class="abs" style="left:439px;top:570px;width:14px;height:14px;border:1px solid #dcdfe6;border-radius:2px;background:#fff"></div>
<div class="t" style="left:482.4px;top:567.00px;font-size:14px;line-height:20px;color:#444;">26</div>
<div class="abs" style="left:572px;top:545px;width:64px;height:64px;border-radius:4px;background:#b9c8d8"></div>
<div class="t" style="left:592px;top:573.80px;font-size:7.5px;line-height:10px;color:rgba(255,255,255,0.7);">小象商</div>
<div class="t" style="left:648.3px;top:545.00px;font-size:14px;line-height:20px;color:#555;">SOO行李箱男万向轮拉杆箱耐磨抗摔26英寸A330旅...</div>
<div class="t" style="left:648.3px;top:565.70px;font-size:12px;line-height:16px;color:#8a8a8a;">万向轮拉杆箱耐磨抗摔</div>
<div class="t" style="left:1012.5px;top:556.60px;font-size:14px;line-height:20px;color:#444;">168.00</div>
<div class="abs" style="left:1012px;top:578px;width:68px;height:20px;border-radius:10px;background:#7b66ee"></div>
<div class="t" style="left:1019.7px;top:579.80px;font-size:12px;line-height:16px;color:#fff;">多规格</div>
<svg style="left:1062px;top:585.5px" width="8" height="5" viewBox="0 0 8 5"><path d="M0.5 0.5L4 4L7.5 0.5" fill="none" stroke="#fff" stroke-width="1"/></svg>
<div class="t" style="left:1162px;top:567.00px;font-size:14px;line-height:20px;color:#444;">5</div>
<div class="t" style="left:1262px;top:567.00px;font-size:14px;line-height:20px;color:#444;">230</div>
<div class="t" style="left:1362px;top:567.00px;font-size:14px;line-height:20px;color:#444;">183</div>
<div class="abs" style="left:422px;top:617px;width:1216px;height:80px;background:#fafafa"></div>
<div class="abs" style="left:439px;top:650px;width:14px;height:14px;border:1px solid #dcdfe6;border-radius:2px;background:#fff"></div>
<div class="t" style="left:482.4px;top:647.00px;font-size:14px;line-height:20px;color:#444;">24</div>
<div class="abs" style="left:572px;top:625px;width:64px;height:64px;border-radius:4px;background:#a9adb3"></div>
<div class="t" style="left:592px;top:653.80px;font-size:7.5px;line-height:10px;color:rgba(255,255,255,0.7);">小象商</div>
<div class="t" style="left:648.3px;top:625.00px;font-size:14px;line-height:20px;color:#555;">【UPF80+】波司登防晒衣2022年夏季防紫外线冰丝...</div>
<div class="t" style="left:648.3px;top:645.70px;font-size:12px;line-height:16px;color:#8a8a8a;">夏季防紫外线冰丝</div>
<div class="t" style="left:1012.5px;top:636.60px;font-size:14px;line-height:20px;color:#444;">349.00</div>
<div class="abs" style="left:1012px;top:658px;width:68px;height:20px;border-radius:10px;background:#7b66ee"></div>
<div class="t" style="left:1019.7px;top:659.80px;font-size:12px;line-height:16px;color:#fff;">多规格</div>
<svg style="left:1062px;top:665.5px" width="8" height="5" viewBox="0 0 8 5"><path d="M0.5 0.5L4 4L7.5 0.5" fill="none" stroke="#fff" stroke-width="1"/></svg>
<div class="t" style="left:1162px;top:647.00px;font-size:14px;line-height:20px;color:#444;">9</div>
<div class="t" style="left:1262px;top:647.00px;font-size:14px;line-height:20px;color:#444;">258</div>
<div class="t" style="left:1362px;top:647.00px;font-size:14px;line-height:20px;color:#444;">142</div>
<div class="abs" style="left:422px;top:697px;width:1216px;height:80px;background:#fff"></div>
<div class="abs" style="left:439px;top:730px;width:14px;height:14px;border:1px solid #dcdfe6;border-radius:2px;background:#fff"></div>
<div class="t" style="left:482.4px;top:727.00px;font-size:14px;line-height:20px;color:#444;">22</div>
<div class="abs" style="left:572px;top:705px;width:64px;height:64px;border-radius:4px;background:#a3b69d"></div>
<div class="t" style="left:592px;top:733.80px;font-size:7.5px;line-height:10px;color:rgba(255,255,255,0.7);">小象商</div>
<div class="t" style="left:648.3px;top:705.00px;font-size:14px;line-height:20px;color:#555;">猫人男士睡衣男夏季100%纯棉薄款圆领套头短袖套...</div>
<div class="t" style="left:648.3px;top:725.70px;font-size:12px;line-height:16px;color:#8a8a8a;">休闲运动可外穿家居服</div>
<div class="t" style="left:1012.5px;top:716.60px;font-size:14px;line-height:20px;color:#444;">18.99</div>
<div class="abs" style="left:1012px;top:738px;width:68px;height:20px;border-radius:10px;background:#7b66ee"></div>
<div class="t" style="left:1019.7px;top:739.80px;font-size:12px;line-height:16px;color:#fff;">多规格</div>
<svg style="left:1062px;top:745.5px" width="8" height="5" viewBox="0 0 8 5"><path d="M0.5 0.5L4 4L7.5 0.5" fill="none" stroke="#fff" stroke-width="1"/></svg>
<div class="t" style="left:1162px;top:727.00px;font-size:14px;line-height:20px;color:#444;">13</div>
<div class="t" style="left:1262px;top:727.00px;font-size:14px;line-height:20px;color:#444;">68</div>
<div class="t" style="left:1362px;top:727.00px;font-size:14px;line-height:20px;color:#444;">55</div>
<svg style="left:1389.7px;top:731.5px" width="11" height="11" viewBox="0 0 11 11"><path d="M0.5 10.5V3Q0.5 0.5 3 0.5H8Q10.5 0.5 10.5 3V10.5z" fill="none" stroke="#7a69c8" stroke-width="1"/><path d="M1 2.2h9" stroke="#7a69c8" stroke-width="1.4"/><path d="M5.5 4.3v4.6M3.2 6.6h4.6" stroke="#7a69c8" stroke-width="1"/></svg>
<div class="abs" style="left:422px;top:777px;width:1216px;height:80px;background:#fafafa"></div>
<div class="abs" style="left:439px;top:810px;width:14px;height:14px;border:1px solid #dcdfe6;border-radius:2px;background:#fff"></div>
<div class="t" style="left:482.4px;top:807.00px;font-size:14px;line-height:20px;color:#444;">21</div>
<div class="abs" style="left:572px;top:785px;width:64px;height:64px;border-radius:4px;background:#7e98b1"></div>
<div class="t" style="left:592px;top:813.80px;font-size:7.5px;line-height:10px;color:rgba(255,255,255,0.7);">小象商</div>
<div class="t" style="left:648.3px;top:785.00px;font-size:14px;line-height:20px;color:#555;">CACUSS B0520帽子男百搭潮流棒球帽女休闲户外鸭...</div>
<div class="t" style="left:648.3px;top:805.70px;font-size:12px;line-height:16px;color:#8a8a8a;">百搭潮流棒球帽</div>
<div class="t" style="left:1012.5px;top:796.60px;font-size:14px;line-height:20px;color:#444;">69.00</div>
<div class="abs" style="left:1012px;top:818px;width:68px;height:20px;border-radius:10px;background:#7b66ee"></div>
<div class="t" style="left:1019.7px;top:819.80px;font-size:12px;line-height:16px;color:#fff;">多规格</div>
<svg style="left:1062px;top:825.5px" width="8" height="5" viewBox="0 0 8 5"><path d="M0.5 0.5L4 4L7.5 0.5" fill="none" stroke="#fff" stroke-width="1"/></svg>
<div class="t" style="left:1162px;top:807.00px;font-size:14px;line-height:20px;color:#444;">3</div>
<div class="t" style="left:1262px;top:807.00px;font-size:14px;line-height:20px;color:#444;">20</div>
<div class="t" style="left:1362px;top:807.00px;font-size:14px;line-height:20px;color:#444;">33</div>
<svg style="left:1389.7px;top:811.5px" width="11" height="11" viewBox="0 0 11 11"><path d="M0.5 10.5V3Q0.5 0.5 3 0.5H8Q10.5 0.5 10.5 3V10.5z" fill="none" stroke="#7a69c8" stroke-width="1"/><path d="M1 2.2h9" stroke="#7a69c8" stroke-width="1.4"/><path d="M5.5 4.3v4.6M3.2 6.6h4.6" stroke="#7a69c8" stroke-width="1"/></svg>
<div class="abs" style="left:422px;top:857px;width:1216px;height:80px;background:#fff"></div>
<div class="abs" style="left:439px;top:890px;width:14px;height:14px;border:1px solid #dcdfe6;border-radius:2px;background:#fff"></div>
<div class="t" style="left:482.4px;top:887.00px;font-size:14px;line-height:20px;color:#444;">19</div>
<div class="abs" style="left:572px;top:865px;width:64px;height:64px;border-radius:4px;background:#dacaa9"></div>
<div class="t" style="left:592px;top:893.80px;font-size:7.5px;line-height:10px;color:rgba(255,255,255,0.7);">小象商</div>
<div class="t" style="left:648.3px;top:865.00px;font-size:14px;line-height:20px;color:#555;">Apple iPhone 13 Pro Max (A2644) 256GB 苍岭绿...</div>
<div class="t" style="left:648.3px;top:885.70px;font-size:12px;line-height:16px;color:#8a8a8a;">Apple iPhone 13 Pro Max (A2644) 256GB 苍岭绿色 支持移...</div>
<div class="t" style="left:1012.5px;top:887.00px;font-size:14px;line-height:20px;color:#444;">7980.00</div>
<div class="t" style="left:1162px;top:887.00px;font-size:14px;line-height:20px;color:#444;">1</div>
<div class="t" style="left:1262px;top:887.00px;font-size:14px;line-height:20px;color:#444;">56</div>
<div class="t" style="left:1362px;top:887.00px;font-size:14px;line-height:20px;color:#444;">19</div>
<svg style="left:1389.7px;top:891.5px" width="11" height="11" viewBox="0 0 11 11"><path d="M0.5 10.5V3Q0.5 0.5 3 0.5H8Q10.5 0.5 10.5 3V10.5z" fill="none" stroke="#7a69c8" stroke-width="1"/><path d="M1 2.2h9" stroke="#7a69c8" stroke-width="1.4"/><path d="M5.5 4.3v4.6M3.2 6.6h4.6" stroke="#7a69c8" stroke-width="1"/></svg>
<div class="abs" style="left:422px;top:937px;width:1216px;height:80px;background:#fafafa"></div>
<div class="abs" style="left:439px;top:970px;width:14px;height:14px;border:1px solid #dcdfe6;border-radius:2px;background:#fff"></div>
<div class="t" style="left:482.4px;top:967.00px;font-size:14px;line-height:20px;color:#444;">18</div>
<div class="abs" style="left:572px;top:945px;width:64px;height:64px;border-radius:4px;background:#e7e1d7"></div>
<div class="t" style="left:592px;top:973.80px;font-size:7.5px;line-height:10px;color:rgba(255,255,255,0.7);">小象商</div>
<div class="t" style="left:648.3px;top:945.00px;font-size:14px;line-height:20px;color:#555;">Apple Watch Series 7 智能手表GPS款41 毫米星光...</div>
<div class="t" style="left:648.3px;top:965.70px;font-size:12px;line-height:16px;color:#8a8a8a;">智能手表GPS</div>
<div class="t" style="left:1012.5px;top:956.60px;font-size:14px;line-height:20px;color:#444;">2999.00</div>
<div class="abs" style="left:1012px;top:978px;width:68px;height:20px;border-radius:10px;background:#7b66ee"></div>
<div class="t" style="left:1019.7px;top:979.80px;font-size:12px;line-height:16px;color:#fff;">多规格</div>
<svg style="left:1062px;top:985.5px" width="8" height="5" viewBox="0 0 8 5"><path d="M0.5 0.5L4 4L7.5 0.5" fill="none" stroke="#fff" stroke-width="1"/></svg>
<div class="t" style="left:1162px;top:967.00px;font-size:14px;line-height:20px;color:#444;">0</div>
<div class="t" style="left:1262px;top:967.00px;font-size:14px;line-height:20px;color:#444;">71</div>
<div class="t" style="left:1362px;top:967.00px;font-size:14px;line-height:20px;color:#444;">59</div>
<svg style="left:1389.7px;top:971.5px" width="11" height="11" viewBox="0 0 11 11"><path d="M0.5 10.5V3Q0.5 0.5 3 0.5H8Q10.5 0.5 10.5 3V10.5z" fill="none" stroke="#7a69c8" stroke-width="1"/><path d="M1 2.2h9" stroke="#7a69c8" stroke-width="1.4"/><path d="M5.5 4.3v4.6M3.2 6.6h4.6" stroke="#7a69c8" stroke-width="1"/></svg>
<div class="abs" style="left:1389px;top:176px;width:8px;height:841px;background:linear-gradient(90deg,rgba(0,0,0,0),rgba(0,0,0,0.05))"></div>
<div class="abs" style="left:1397px;top:217px;width:241px;height:80px;background:#fff"></div>
<div class="abs" style="left:1413px;top:245.5px;width:74px;height:24px;border-radius:4px;background:#f0f9eb;border:1px solid #e1f3d8"></div>
<div class="t" style="left:1423.3px;top:249.80px;font-size:12px;line-height:16px;color:#67c23a;">上架中</div>
<svg style="left:1466px;top:255px" width="8" height="5" viewBox="0 0 8 5"><path d="M0.5 0.5L4 4L7.5 0.5" fill="none" stroke="#8fd06d" stroke-width="1"/></svg>
<div class="t" style="left:1492.8px;top:247.00px;font-size:14px;line-height:20px;color:#7766dc;">编辑</div>
<div class="t" style="left:1538.8px;top:247.00px;font-size:14px;line-height:20px;color:#7766dc;">复制</div>
<div class="t" style="left:1584px;top:247.00px;font-size:14px;line-height:20px;color:#ec7272;">删除</div>
<div class="abs" style="left:1397px;top:297px;width:241px;height:80px;background:#fafafa"></div>
<div class="abs" style="left:1413px;top:325.5px;width:74px;height:24px;border-radius:4px;background:#f0f9eb;border:1px solid #e1f3d8"></div>
<div class="t" style="left:1423.3px;top:329.80px;font-size:12px;line-height:16px;color:#67c23a;">上架中</div>
<svg style="left:1466px;top:335px" width="8" height="5" viewBox="0 0 8 5"><path d="M0.5 0.5L4 4L7.5 0.5" fill="none" stroke="#8fd06d" stroke-width="1"/></svg>
<div class="t" style="left:1492.8px;top:327.00px;font-size:14px;line-height:20px;color:#7766dc;">编辑</div>
<div class="t" style="left:1538.8px;top:327.00px;font-size:14px;line-height:20px;color:#7766dc;">复制</div>
<div class="t" style="left:1584px;top:327.00px;font-size:14px;line-height:20px;color:#ec7272;">删除</div>
<div class="abs" style="left:1397px;top:377px;width:241px;height:80px;background:#fff"></div>
<div class="abs" style="left:1413px;top:405.5px;width:74px;height:24px;border-radius:4px;background:#f0f9eb;border:1px solid #e1f3d8"></div>
<div class="t" style="left:1423.3px;top:409.80px;font-size:12px;line-height:16px;color:#67c23a;">上架中</div>
<svg style="left:1466px;top:415px" width="8" height="5" viewBox="0 0 8 5"><path d="M0.5 0.5L4 4L7.5 0.5" fill="none" stroke="#8fd06d" stroke-width="1"/></svg>
<div class="t" style="left:1492.8px;top:407.00px;font-size:14px;line-height:20px;color:#7766dc;">编辑</div>
<div class="t" style="left:1538.8px;top:407.00px;font-size:14px;line-height:20px;color:#7766dc;">复制</div>
<div class="t" style="left:1584px;top:407.00px;font-size:14px;line-height:20px;color:#ec7272;">删除</div>
<div class="abs" style="left:1397px;top:457px;width:241px;height:80px;background:#fafafa"></div>
<div class="abs" style="left:1413px;top:485.5px;width:74px;height:24px;border-radius:4px;background:#fef0f0;border:1px solid #fde2e2"></div>
<div class="t" style="left:1423.3px;top:489.80px;font-size:12px;line-height:16px;color:#f56c6c;">已下架</div>
<svg style="left:1466px;top:495px" width="8" height="5" viewBox="0 0 8 5"><path d="M0.5 0.5L4 4L7.5 0.5" fill="none" stroke="#f8a0a0" stroke-width="1"/></svg>
<div class="t" style="left:1492.8px;top:487.00px;font-size:14px;line-height:20px;color:#7766dc;">编辑</div>
<div class="t" style="left:1538.8px;top:487.00px;font-size:14px;line-height:20px;color:#7766dc;">复制</div>
<div class="t" style="left:1584px;top:487.00px;font-size:14px;line-height:20px;color:#ec7272;">删除</div>
<div class="abs" style="left:1397px;top:537px;width:241px;height:80px;background:#fff"></div>
<div class="abs" style="left:1413px;top:565.5px;width:74px;height:24px;border-radius:4px;background:#f0f9eb;border:1px solid #e1f3d8"></div>
<div class="t" style="left:1423.3px;top:569.80px;font-size:12px;line-height:16px;color:#67c23a;">上架中</div>
<svg style="left:1466px;top:575px" width="8" height="5" viewBox="0 0 8 5"><path d="M0.5 0.5L4 4L7.5 0.5" fill="none" stroke="#8fd06d" stroke-width="1"/></svg>
<div class="t" style="left:1492.8px;top:567.00px;font-size:14px;line-height:20px;color:#7766dc;">编辑</div>
<div class="t" style="left:1538.8px;top:567.00px;font-size:14px;line-height:20px;color:#7766dc;">复制</div>
<div class="t" style="left:1584px;top:567.00px;font-size:14px;line-height:20px;color:#ec7272;">删除</div>
<div class="abs" style="left:1397px;top:617px;width:241px;height:80px;background:#fafafa"></div>
<div class="abs" style="left:1413px;top:645.5px;width:74px;height:24px;border-radius:4px;background:#f0f9eb;border:1px solid #e1f3d8"></div>
<div class="t" style="left:1423.3px;top:649.80px;font-size:12px;line-height:16px;color:#67c23a;">上架中</div>
<svg style="left:1466px;top:655px" width="8" height="5" viewBox="0 0 8 5"><path d="M0.5 0.5L4 4L7.5 0.5" fill="none" stroke="#8fd06d" stroke-width="1"/></svg>
<div class="t" style="left:1492.8px;top:647.00px;font-size:14px;line-height:20px;color:#7766dc;">编辑</div>
<div class="t" style="left:1538.8px;top:647.00px;font-size:14px;line-height:20px;color:#7766dc;">复制</div>
<div class="t" style="left:1584px;top:647.00px;font-size:14px;line-height:20px;color:#ec7272;">删除</div>
<div class="abs" style="left:1397px;top:697px;width:241px;height:80px;background:#fff"></div>
<div class="abs" style="left:1413px;top:725.5px;width:74px;height:24px;border-radius:4px;background:#f0f9eb;border:1px solid #e1f3d8"></div>
<div class="t" style="left:1423.3px;top:729.80px;font-size:12px;line-height:16px;color:#67c23a;">上架中</div>
<svg style="left:1466px;top:735px" width="8" height="5" viewBox="0 0 8 5"><path d="M0.5 0.5L4 4L7.5 0.5" fill="none" stroke="#8fd06d" stroke-width="1"/></svg>
<div class="t" style="left:1492.8px;top:727.00px;font-size:14px;line-height:20px;color:#7766dc;">编辑</div>
<div class="t" style="left:1538.8px;top:727.00px;font-size:14px;line-height:20px;color:#7766dc;">复制</div>
<div class="t" style="left:1584px;top:727.00px;font-size:14px;line-height:20px;color:#ec7272;">删除</div>
<div class="abs" style="left:1397px;top:777px;width:241px;height:80px;background:#fafafa"></div>
<div class="abs" style="left:1413px;top:805.5px;width:74px;height:24px;border-radius:4px;background:#f0f9eb;border:1px solid #e1f3d8"></div>
<div class="t" style="left:1423.3px;top:809.80px;font-size:12px;line-height:16px;color:#67c23a;">上架中</div>
<svg style="left:1466px;top:815px" width="8" height="5" viewBox="0 0 8 5"><path d="M0.5 0.5L4 4L7.5 0.5" fill="none" stroke="#8fd06d" stroke-width="1"/></svg>
<div class="t" style="left:1492.8px;top:807.00px;font-size:14px;line-height:20px;color:#7766dc;">编辑</div>
<div class="t" style="left:1538.8px;top:807.00px;font-size:14px;line-height:20px;color:#7766dc;">复制</div>
<div class="t" style="left:1584px;top:807.00px;font-size:14px;line-height:20px;color:#ec7272;">删除</div>
<div class="abs" style="left:1397px;top:857px;width:241px;height:80px;background:#fff"></div>
<div class="abs" style="left:1413px;top:885.5px;width:74px;height:24px;border-radius:4px;background:#f0f9eb;border:1px solid #e1f3d8"></div>
<div class="t" style="left:1423.3px;top:889.80px;font-size:12px;line-height:16px;color:#67c23a;">上架中</div>
<svg style="left:1466px;top:895px" width="8" height="5" viewBox="0 0 8 5"><path d="M0.5 0.5L4 4L7.5 0.5" fill="none" stroke="#8fd06d" stroke-width="1"/></svg>
<div class="t" style="left:1492.8px;top:887.00px;font-size:14px;line-height:20px;color:#7766dc;">编辑</div>
<div class="t" style="left:1538.8px;top:887.00px;font-size:14px;line-height:20px;color:#7766dc;">复制</div>
<div class="t" style="left:1584px;top:887.00px;font-size:14px;line-height:20px;color:#ec7272;">删除</div>
<div class="abs" style="left:1397px;top:937px;width:241px;height:80px;background:#fafafa"></div>
<div class="abs" style="left:1413px;top:965.5px;width:74px;height:24px;border-radius:4px;background:#f0f9eb;border:1px solid #e1f3d8"></div>
<div class="t" style="left:1423.3px;top:969.80px;font-size:12px;line-height:16px;color:#67c23a;">上架中</div>
<svg style="left:1466px;top:975px" width="8" height="5" viewBox="0 0 8 5"><path d="M0.5 0.5L4 4L7.5 0.5" fill="none" stroke="#8fd06d" stroke-width="1"/></svg>
<div class="t" style="left:1492.8px;top:967.00px;font-size:14px;line-height:20px;color:#7766dc;">编辑</div>
<div class="t" style="left:1538.8px;top:967.00px;font-size:14px;line-height:20px;color:#7766dc;">复制</div>
<div class="t" style="left:1584px;top:967.00px;font-size:14px;line-height:20px;color:#ec7272;">删除</div>
<div class="abs" style="left:1397px;top:176px;width:241px;height:41px;background:#f5f5f5"></div>
<div class="t" style="left:1410px;top:186.60px;font-size:14px;line-height:20px;color:#666;">操作</div>
<div class="abs" style="left:241px;top:1215px;width:1417px;height:56px;background:#fff;box-shadow:0 -2px 6px rgba(0,0,0,0.06)"></div>
<div class="t" style="left:261.8px;top:1232.70px;font-size:14px;line-height:20px;color:#333;">已选择 0 项</div>
<div class="abs" style="left:346px;top:1227px;width:60px;height:32px;border-radius:4px;background:#fab6b6;color:#fff;font-size:14px;line-height:32px;text-align:center">删除</div>
<div class="abs" style="left:418px;top:1227px;width:60px;height:32px;border-radius:4px;background:#b3e19d;color:#fff;font-size:14px;line-height:32px;text-align:center">上架</div>
<div class="abs" style="left:490px;top:1227px;width:60px;height:32px;border-radius:4px;background:#fab6b6;color:#fff;font-size:14px;line-height:32px;text-align:center">下架</div>
<div class="abs" style="left:562px;top:1227px;width:60px;height:32px;border-radius:4px;background:#c8c9cc;color:#fff;font-size:14px;line-height:32px;text-align:center">隐藏</div>
<div class="t" style="left:1151px;top:1233.00px;font-size:14px;line-height:20px;color:#555;">共 23 条</div>
<div class="abs" style="left:1221px;top:1228px;width:126px;height:30px;border:1px solid #dcdfe6;border-radius:4px;background:#fff"></div>
<div class="t" style="left:1248px;top:1233.00px;font-size:14px;line-height:20px;color:#555;">10条/页</div>
<svg style="left:1325px;top:1240px" width="10" height="6" viewBox="0 0 10 6"><path d="M0.5 0.5L5 5L9.5 0.5" fill="none" stroke="#c0c4cc" stroke-width="1"/></svg>
<svg style="left:1377px;top:1238px" width="6" height="10" viewBox="0 0 6 10"><path d="M5.5 0.5L1 5L5.5 9.5" fill="none" stroke="#c0c4cc" stroke-width="1.1"/></svg>
<div class="t" style="left:1407.5px;top:1233.00px;font-size:14px;line-height:20px;color:#7b66ee;font-weight:bold">1</div>
<div class="t" style="left:1440px;top:1233.00px;font-size:14px;line-height:20px;color:#333;">2</div>
<div class="t" style="left:1472px;top:1233.00px;font-size:14px;line-height:20px;color:#333;">3</div>
<svg style="left:1505px;top:1238px" width="6" height="10" viewBox="0 0 6 10"><path d="M0.5 0.5L5 5L0.5 9.5" fill="none" stroke="#444" stroke-width="1.1"/></svg>
<div class="t" style="left:1539.7px;top:1233.00px;font-size:14px;line-height:20px;color:#555;">前往</div>
<div class="abs" style="left:1568px;top:1231px;width:72px;height:24px;border:1px solid #dcdfe6;border-radius:3px;background:#fff"></div>
<div class="t" style="left:1592px;top:1233.00px;font-size:14px;line-height:20px;color:#333;">1</div>
<div class="abs" style="left:1613px;top:1176px;width:40px;height:40px;border-radius:50%;background:#fff;box-shadow:0 0 8px rgba(0,0,0,0.08)"></div>
<svg style="left:1626px;top:1188px" width="14" height="15" viewBox="0 0 14 15"><path d="M7 0.8c-2.8 0-4.3 2-4.3 4.5v2.5L1 10.5v1h12v-1L11.3 7.8V5.3C11.3 2.8 9.8.8 7 .8z" fill="#7b66ee"/><ellipse cx="7" cy="13.3" rx="1.8" ry="1" fill="#7b66ee"/></svg>
<div class="abs" style="left:1613px;top:1226px;width:40px;height:40px;border-radius:50%;background:#fff;box-shadow:0 0 8px rgba(0,0,0,0.08)"></div>
<svg style="left:1625px;top:1238px" width="17" height="16" viewBox="0 0 17 16"><path d="M8.5 0.5a7.5 7.5 0 1 1-3.6 14.1L0.8 15.5l1.5-3.3A7.5 7.5 0 0 1 8.5.5z" fill="#7b66ee"/><circle cx="5.3" cy="8" r="1" fill="#fff"/><circle cx="8.5" cy="8" r="1" fill="#fff"/><circle cx="11.7" cy="8" r="1" fill="#fff"/></svg>
<div class="abs" style="left:1661px;top:50px;width:4px;height:1232px;background:rgba(0,0,0,0.018)"></div>
</body></html>
